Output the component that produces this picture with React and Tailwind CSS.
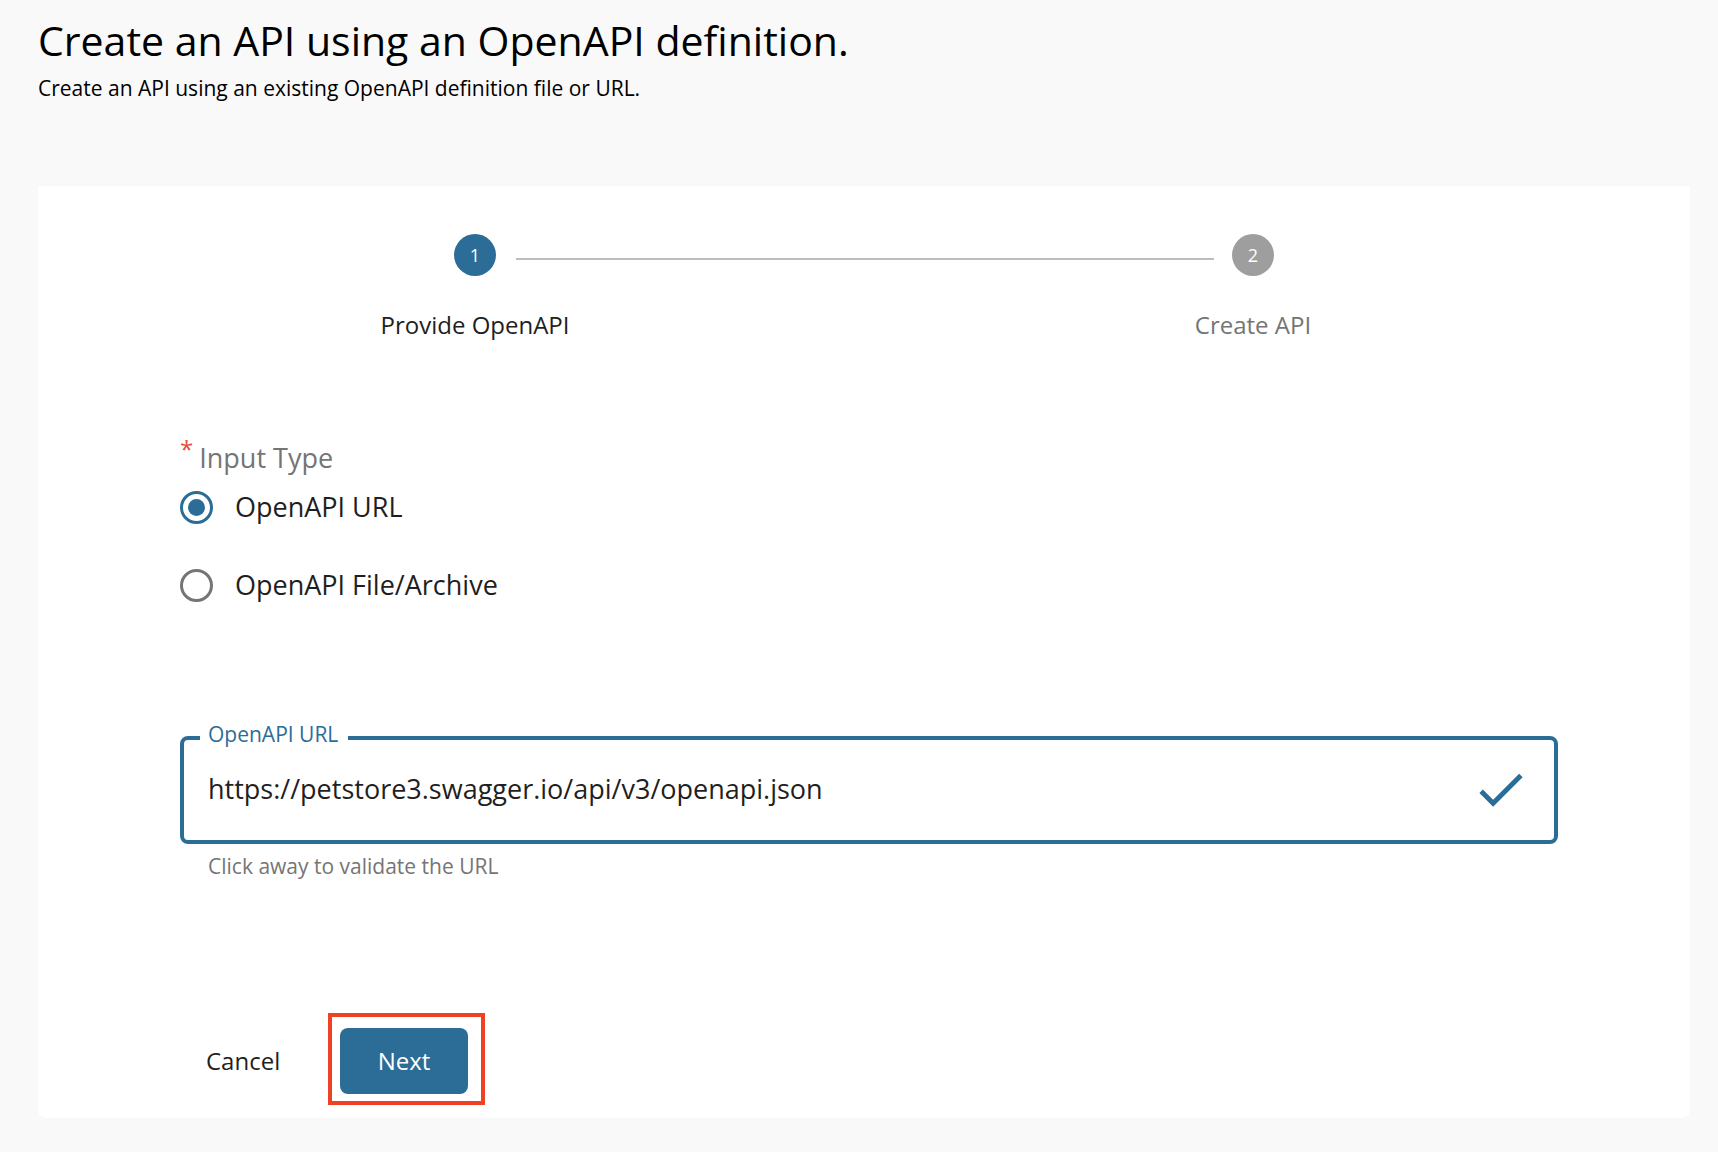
import { useState } from "react";

const sourceOptions = [
  { value: "url", label: "OpenAPI URL" },
  { value: "file", label: "OpenAPI File/Archive" },
];

function Step({ number, label, active }) {
  return (
    <li
      aria-current={active ? "step" : undefined}
      className="relative flex flex-1 flex-col items-center gap-[33px]"
    >
      {number > 1 && (
        <span className="absolute top-6 right-[calc(50%+39px)] left-[calc(-50%+41px)] h-0.5 bg-[#bdbdbd]" />
      )}
      <span
        className={`flex size-[42px] items-center justify-center rounded-full text-[18px] leading-6 font-medium text-white ${
          active ? "bg-[#2c6d98]" : "bg-[#9e9e9e]"
        }`}
      >
        {number}
      </span>
      <span className={`text-[24px] leading-8 ${active ? "text-[#1f1f1f]" : "text-[#757575]"}`}>
        {label}
      </span>
    </li>
  );
}

export default function App() {
  const [source, setSource] = useState("url");
  const [url, setUrl] = useState("https://petstore3.swagger.io/api/v3/openapi.json");

  return (
    <main className="min-h-screen bg-[#f9f9f9] pt-3 pr-7 pb-8 pl-[38px] font-['Open_Sans',sans-serif] text-[#1f1f1f]">
      <header className="text-black">
        <h1 className="text-[41px] leading-[56px]">Create an API using an OpenAPI definition.</h1>
        <p className="mt-1.5 text-[21px] leading-7">
          Create an API using an existing OpenAPI definition file or URL.
        </p>
      </header>

      <section className="mt-[84px] rounded-b-lg bg-white pt-12 pb-6">
        <ol className="mx-12 flex">
          <Step number={1} label="Provide OpenAPI" active />
          <Step number={2} label="Create API" />
        </ol>

        <form className="mt-[98px] pr-[132px] pl-[142px]" onSubmit={(e) => e.preventDefault()}>
          <fieldset>
            <legend className="flex items-start gap-1.5 text-[27px] leading-[38px] text-[#757575]">
              <span className="text-[24px] leading-5 text-[#e84c3d]">*</span>
              Input Type
            </legend>
            <div className="mt-[11px] flex flex-col items-start gap-10">
              {sourceOptions.map((option) => (
                <label
                  key={option.value}
                  className="flex items-center gap-[22px] text-[27px] leading-[38px]"
                >
                  <input
                    type="radio"
                    name="source"
                    value={option.value}
                    checked={source === option.value}
                    onChange={() => setSource(option.value)}
                    className="grid size-[33px] appearance-none place-content-center rounded-full border-3 border-[#757575] before:size-[17px] before:rounded-full checked:border-[#2c6d98] checked:before:bg-[#2c6d98]"
                  />
                  {option.label}
                </label>
              ))}
            </div>
          </fieldset>

          <div className="relative mt-[132px] flex h-[108px] items-center rounded-lg border-4 border-[#2c6d98] px-6 pb-0.5">
            <label
              htmlFor="openapi-url"
              className="absolute -top-5 left-4 bg-white pr-2.5 pl-2 text-[21px] leading-7 text-[#2c6d98]"
            >
              OpenAPI URL
            </label>
            <input
              id="openapi-url"
              type="text"
              value={url}
              onChange={(e) => setUrl(e.target.value)}
              aria-describedby="openapi-url-hint"
              className="min-w-0 flex-1 text-[27px] leading-[38px] outline-none"
            />
            <svg viewBox="0 0 24 24" className="size-[59px] fill-[#2c6d98]" aria-hidden="true">
              <path d="M9 16.17 4.83 12l-1.42 1.41L9 19 21 7l-1.41-1.41z" />
            </svg>
          </div>
          <p id="openapi-url-hint" className="mt-2 ml-7 text-[21px] leading-7 text-[#757575]">
            Click away to validate the URL
          </p>

          <div className="mt-[148px] flex items-center gap-8 text-[24px] leading-8">
            <button type="button" className="h-[66px] w-32 rounded-lg pr-9 pl-[26px] text-left">
              Cancel
            </button>
            <div className="relative">
              <button type="submit" className="h-[66px] w-32 rounded-lg bg-[#2c6d98] text-white">
                Next
              </button>
              <span className="pointer-events-none absolute -top-[15px] -right-[17px] -bottom-[11px] -left-3 border-4 border-[#ef4123]" />
            </div>
          </div>
        </form>
      </section>
    </main>
  );
}
